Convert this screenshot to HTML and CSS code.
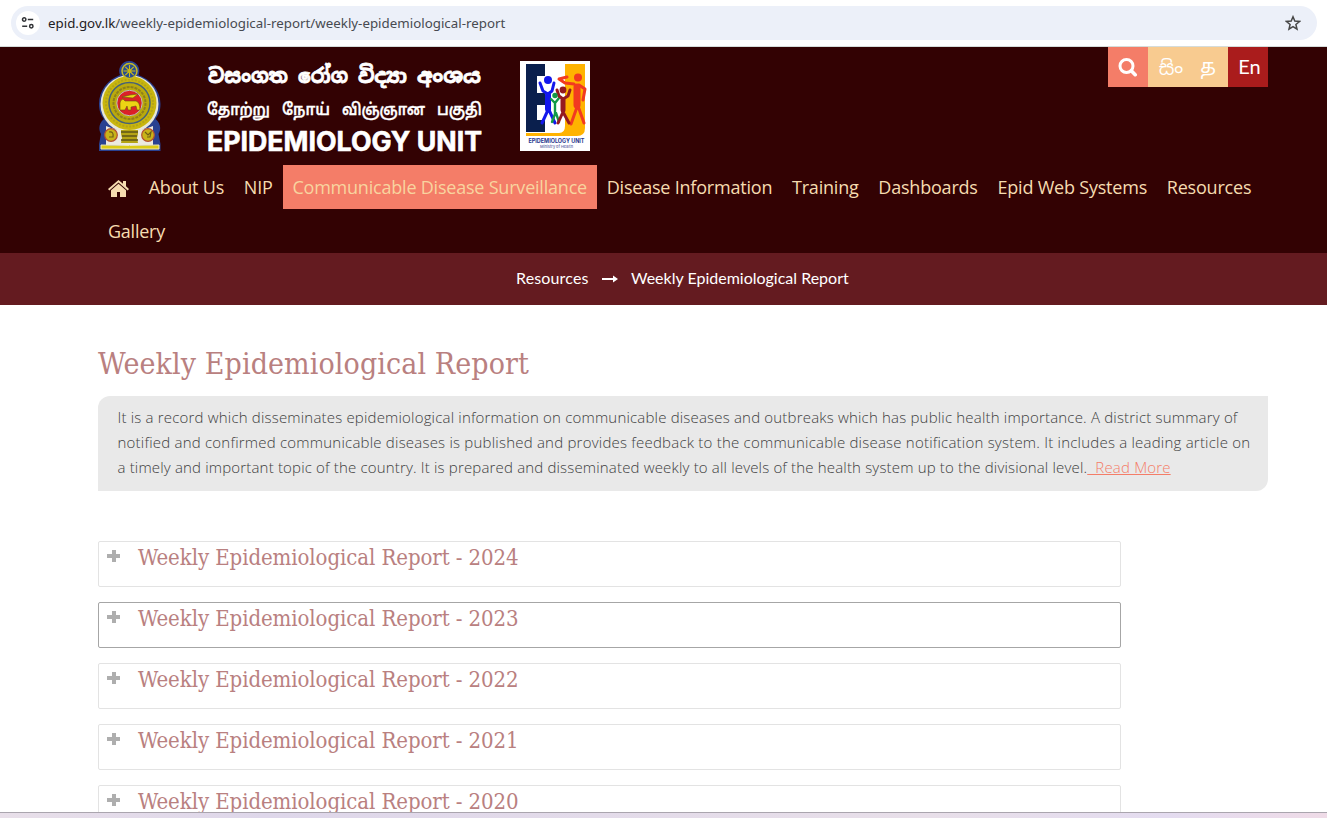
FILE: index.html
```html
<!DOCTYPE html>
<html lang="en">
<head>
<meta charset="utf-8">
<title>Weekly Epidemiological Report</title>
<link rel="stylesheet" href="styles.css">
</head>
<body>
<div class="browser">
  <div class="address">
    <span class="site-info"><svg width="14" height="14" viewBox="0 0 14 14" fill="none" stroke="#303236" stroke-width="1.5"><circle cx="3.2" cy="3.5" r="1.7"/><path d="M6.8 3.5h5.4M1.2 10.3h5"/><circle cx="10.3" cy="10.3" r="1.7"/></svg></span>
    <span class="url"><b>epid.gov.lk</b>/weekly-epidemiological-report/weekly-epidemiological-report</span>
    <svg class="star" width="16" height="16" viewBox="0 0 16 16" fill="none" stroke="#474747" stroke-width="1.5"><path d="M8 1.8l1.8 4.3 4.7.4-3.6 3 1.1 4.6L8 11.6l-4 2.500 1.100-4.600-3.600-3 4.700-.4z"/></svg>
  </div>
</div>
<header class="header">
  <div class="container">
    <div class="top">
      <svg class="emblem" width="64" height="92" viewBox="0 0 64 92">
        <path d="M31.500 0a10 10 0 0 1 9 14c13 5 22 16 22 29 0 7-2 11-5 15 5 4 6 10 3 15l2 10v7H1v-7l2-10c-3-5-2-11 3-15-3-4-5-8-5-15 0-13 8-24 21-29a10 10 0 0 1 9.500-14z" fill="#294191"/>
        <circle cx="31.500" cy="43" r="29" fill="#e8e7d7"/>
        <circle cx="31.500" cy="42" r="27" fill="#c9b60d"/>
        <circle cx="31.500" cy="42" r="23.500" fill="none" stroke="#b3a31a" stroke-width="2" stroke-dasharray="2 1.500"/>
        <circle cx="31.500" cy="42" r="20.500" fill="#baaa0c" stroke="#476177" stroke-width="1.500"/>
        <circle cx="31.500" cy="42" r="16" fill="none" stroke="#8f801b" stroke-width="2" stroke-dasharray="3 1"/>
        <circle cx="31.500" cy="42" r="12.700" fill="#db2028" stroke="#bdc1b9" stroke-width="1"/>
        <circle cx="31.500" cy="10" r="7.500" fill="#284d91" stroke="#c6ba26" stroke-width="1.500"/>
        <path d="M31.500 4v12M25.500 10h12M27.300 5.800l8.400 8.400M27.300 14.200l8.400-8.400" stroke="#d0bd15" stroke-width="1.100"/>
        <circle cx="31.500" cy="10" r="2" fill="#c9b60d"/>
        <path d="M22 49v-7q0-3 3-4l2 2h11q4 1 4 9h-3l-1-4-5 1v3h-3l-1-4-2 4zM24 36l8-2 8-1-5 4z" fill="#ecd414" stroke="#675410" stroke-width=".6"/>
        <path d="M8 65q23 10 47 0v19H8z" fill="#eceae0"/>
        <circle cx="13" cy="74" r="6.300" fill="#c8b418" stroke="#b54f31" stroke-width="1.200"/>
        <circle cx="50" cy="74" r="6.300" fill="#c8b418" stroke="#b54f31" stroke-width="1.200"/>
        <path d="M11 71q5-1 4 5h-4m36-5l3 3 3-3-1 5h-3" fill="none" stroke="#6d5e17" stroke-width="1.200"/>
        <path d="M23 69h17v4l-1 4 1 5H23l1-5-1-4z" fill="#b5a415"/><path d="M23 71h17M24 75h15M23 79h17" stroke="#5d5418" stroke-width="1.500"/>
        <path d="M3 84q28 1 58 0v4H3z" fill="#dccc14" stroke="#eee9b5" stroke-width="1"/>
      </svg>
      <svg class="wordmark" width="280" height="94" viewBox="0 0 280 94" fill="#fff" stroke="#fff">
        <g class="sinhala" stroke-width=".8">
          <text x="4" y="23.500" textLength="80" lengthAdjust="spacingAndGlyphs">වසංගත</text>
          <text x="94" y="23.500" textLength="50" lengthAdjust="spacingAndGlyphs">රෝග</text>
          <text x="154" y="23.500" textLength="49" lengthAdjust="spacingAndGlyphs">විද්‍යා</text>
          <text x="213" y="23.500" textLength="64" lengthAdjust="spacingAndGlyphs">අංශය</text>
        </g>
        <g class="tamil" stroke-width=".3">
          <text x="3" y="55.500" textLength="63" lengthAdjust="spacingAndGlyphs">தோற்று</text>
          <text x="78" y="55.500" textLength="48" lengthAdjust="spacingAndGlyphs">நோய்</text>
          <text x="138" y="55.500" textLength="83" lengthAdjust="spacingAndGlyphs">விஞ்ஞான</text>
          <text x="233" y="55.500" textLength="45" lengthAdjust="spacingAndGlyphs">பகுதி</text>
        </g>
        <text class="latin" stroke-width=".6" x="3" y="91.500" textLength="275" lengthAdjust="spacingAndGlyphs">EPIDEMIOLOGY UNIT</text>
      </svg>
      <svg class="unit-logo" width="70" height="90" viewBox="0 0 70 90">
        <path d="M0 0h70v90H0z" fill="#fff"/>
        <path d="M6 3h19v12h-8v17h8v12h-8v15h8v12H6z" fill="#0a1f4d"/>
        <path d="M45 3h20v64q0 8-8 8H6v-3h33q6 0 6-7z" fill="#ffb300"/>
        <g fill="none" stroke-width="3" stroke-linecap="round" stroke-linejoin="round">
          <g stroke="#1317ec"><path d="M20 22l3 8 5 3 4-3 2-8M28 33v16l-6 13M29 49l6 13"/><path d="M28 34v14" stroke-width="6"/></g>
          <g stroke="#f23a20"><path d="M59 24l6 4-2 11M54 23l-9-1-6-4 8-2M57 28v18l-6 17M58 45l6 17"/><path d="M57 26v18" stroke-width="7"/></g>
          <g stroke="#119947" stroke-width="2.400"><path d="M31 38l4 4 4-5M35 42v11l-3 8M36 52l3 9"/></g>
          <g stroke="#951a20" stroke-width="3"><path d="M37 29l2 6 4 3 5-3 2-6M43 39v12l-5 11M43 51l6 11"/><path d="M43 39v10" stroke-width="5"/></g>
        </g>
        <circle cx="28" cy="19" r="4" fill="#1317ec"/><circle cx="58" cy="16.500" r="4" fill="#f23a20"/><circle cx="35" cy="34.500" r="2.700" fill="#119947"/><circle cx="43" cy="29" r="3.400" fill="#951a20"/>
        <text class="logo-name" x="8.500" y="81.500" textLength="56" lengthAdjust="spacingAndGlyphs">EPIDEMIOLOGY UNIT</text>
        <text class="logo-sub" x="20" y="86.500" textLength="33" lengthAdjust="spacingAndGlyphs">Ministry of Health</text>
      </svg>
      <div class="tools">
        <span class="search"><svg width="20" height="20" viewBox="0 0 20 20" fill="none" stroke="#fff"><circle cx="8.500" cy="9" r="6.500" stroke-width="3"/><path d="M13.300 13.800l3.900 3.900" stroke-width="3.600" stroke-linecap="round"/></svg></span>
        <span class="lang si">සිං</span><span class="lang">த</span><span class="lang current">En</span>
      </div>
    </div>
    <nav class="nav">
      <a class="home"><svg width="21" height="18" viewBox="0 0 21 18" fill="#f6dcb0"><path d="M10.500 0L0 9l1.300 1.400 9.200-7.900 9.200 7.900L21 9l-3-2.700V1h-3v2.800z"/><path d="M10.500 3.700L3 10.200V17h6v-5h3v5h6v-6.800z"/></svg></a>
      <a>About Us</a><a>NIP</a><a class="active">Communicable Disease Surveillance</a><a>Disease Information</a><a>Training</a><a>Dashboards</a><a>Epid Web Systems</a><a>Resources</a><a>Gallery</a>
    </nav>
  </div>
</header>
<div class="crumbs"><span class="c1">Resources</span><svg width="16" height="8" viewBox="0 0 16 8"><path d="M0 3h11V.5L16 4l-5 3.500V5H0z" fill="#fff"/></svg><span class="c2">Weekly Epidemiological Report</span></div>
<main class="container">
  <h1>Weekly Epidemiological Report</h1>
  <div class="intro">
    <p class="l1">It is a record which disseminates epidemiological information on communicable diseases and outbreaks which has public health importance. A district summary of</p>
    <p class="l2">notified and confirmed communicable diseases is published and provides feedback to the communicable disease notification system. It includes a leading article on</p>
    <p class="l3">a timely and important topic of the country. It is prepared and disseminated weekly to all levels of the health system up to the divisional level.<a>&nbsp; Read More</a></p>
  </div>
  <div class="reports">
    <div class="report"><i class="plus"></i><h2>Weekly Epidemiological Report - 2024</h2></div>
    <div class="report focused"><i class="plus"></i><h2>Weekly Epidemiological Report - 2023</h2></div>
    <div class="report"><i class="plus"></i><h2>Weekly Epidemiological Report - 2022</h2></div>
    <div class="report"><i class="plus"></i><h2>Weekly Epidemiological Report - 2021</h2></div>
    <div class="report"><i class="plus"></i><h2>Weekly Epidemiological Report - 2020</h2></div>
  </div>
</main>
<footer class="edge"></footer>
</body>
</html>
```
FILE: styles.css
```css
* { box-sizing: border-box; }
body { margin: 0; height: 818px; overflow: hidden; background: #fff; display: flex; flex-direction: column; }
.browser { flex: none; height: 47px; padding: 6px 10px 0 11px; border-bottom: 1px solid #d5dcda; }
.address { height: 34px; border-radius: 17px; background: #ecf0f9; display: flex; align-items: center; padding: 0 16px 0 5px; }
.site-info { width: 24px; height: 24px; border-radius: 50%; background: #fff; display: flex; align-items: center; justify-content: center; }
.url { margin-left: 8px; font: 13.3px/20px "Noto Sans", sans-serif; letter-spacing: .015px; color: #474a50; white-space: nowrap; }
.url b { font-weight: 400; color: #1f2023; }
.star { margin-left: auto; }
.container { width: 1170px; margin-left: 98px; }
.header { flex: none; height: 206px; background: #330203; }
.top { height: 118px; display: flex; align-items: flex-start; }
.emblem { margin: 14px 0 0 -.5px; }
.wordmark { margin: 12px 0 0 42.5px; overflow: visible; }
.sinhala { font: 700 20px "Noto Sans Sinhala", "Noto Sans", sans-serif; }
.tamil { font: 600 16.5px "Noto Sans Tamil", "Noto Sans", sans-serif; }
.latin { font: 700 26.5px Inter, sans-serif; }
.unit-logo { margin: 14px 0 0 36px; }
.logo-name { font: 700 5.5px Inter, sans-serif; fill: #26358c; }
.logo-sub { font: 600 4px Inter, sans-serif; fill: #7076ae; }
.tools { margin-left: auto; display: flex; }
.tools span { width: 40px; height: 40px; display: flex; align-items: center; justify-content: center; color: #fff; }
.tools .search { background: #f47d68; }
.tools .lang { background: #f8cb90; font: 19px/40px "Noto Sans Sinhala", "Noto Sans Tamil", "Noto Sans", sans-serif; }
.tools .si { padding: 3px 0 0 6px; }
.tools .current { background: #aa1c1c; padding: 0 0 1px 3px; font: 20px/39px Lato, sans-serif; }
.nav { display: flex; flex-wrap: wrap; }
.nav a { height: 44px; padding: 0 9.9px; font: 18px/44px "Open Sans", sans-serif; letter-spacing: -.21px; color: #f6dcb0; white-space: nowrap; }
.nav .home { display: flex; align-items: center; padding-top: 3px; }
.nav .active { background: #f47d68; color: #f8d49f; }
.crumbs { flex: none; height: 52px; padding: 0 0 1px 516px; background: #641b20; color: #fff; font: 16px/49px Lato, sans-serif; display: flex; align-items: center; white-space: nowrap; }
.crumbs span { padding-bottom: 2px; }
.crumbs svg { margin: 0 13px; }
.c1 { width: 73px; letter-spacing: .15px; }
main.container { flex: 1; min-height: 0; }
h1 { margin: 37px 0 0; height: 54px; font: 400 30px/43px "DejaVu Serif Condensed", "DejaVu Serif", serif; letter-spacing: .1px; color: #b98080; white-space: nowrap; }
.intro { height: 95px; padding: 9px 0 0 19.5px; border-radius: 12px 0 12px 0; background: #e9e9e9; }
.intro p { margin: 0; font: 300 15px/25px "Open Sans", sans-serif; color: #404040; white-space: nowrap; }
.intro .l1 { letter-spacing: .187px; }
.intro .l2 { letter-spacing: .218px; }
.intro .l3 { letter-spacing: .17px; }
.intro a { color: #f47d68; text-decoration: underline; }
.reports { width: 1023px; margin-top: 50px; display: flex; flex-direction: column; gap: 15px; }
.report { flex: none; height: 46px; border: 1px solid #e3e3e3; border-radius: 2px; padding-left: 8px; display: flex; align-items: flex-start; }
.focused { border-color: #a6a6a6; }
.plus { width: 13px; height: 12px; margin-top: 8px; background: linear-gradient(#aeaeae, #aeaeae) center / 13px 4px no-repeat, linear-gradient(#aeaeae, #aeaeae) center / 4px 12px no-repeat; }
h2 { margin: 0 0 0 18px; font: 400 22px/31px "DejaVu Serif Condensed", "DejaVu Serif", serif; letter-spacing: -.08px; color: #b98080; white-space: nowrap; }
.edge { flex: none; z-index: 1; height: 6px; border-top: 1px solid #aaa5ae; background: linear-gradient(90deg, #e8dfe9, #ded7ea 20%, #e8dfe9 70%, #e4dcf0 88%, #efdbe7); }
```
